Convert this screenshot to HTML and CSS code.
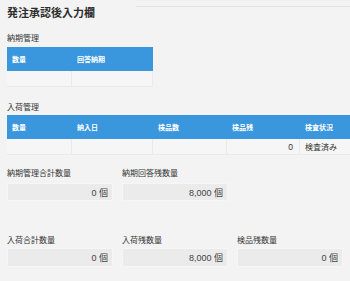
FILE: index.html
```html
<!DOCTYPE html>
<html lang="ja">
<head>
<meta charset="utf-8">
<link rel="stylesheet" href="styles.css">
</head>
<body>
<div class="page">
  <div class="head">
    <h1 class="title">発注承認後入力欄</h1>
    <div class="topline"></div>
  </div>

  <div class="section-label first">納期管理</div>
  <div class="table t1">
    <div class="th">数量</div>
    <div class="th">回答納期</div>
    <div class="td"></div>
    <div class="td"></div>
  </div>

  <div class="section-label second">入荷管理</div>
  <div class="table t2">
    <div class="th">数量</div>
    <div class="th">納入日</div>
    <div class="th">検品数</div>
    <div class="th">検品残</div>
    <div class="th">検査状況</div>
    <div class="td"></div>
    <div class="td"></div>
    <div class="td"></div>
    <div class="td num">0</div>
    <div class="td">検査済み</div>
  </div>

  <div class="fields row1">
    <div class="field">
      <div class="flabel">納期管理合計数量</div>
      <div class="fbox">0 個</div>
    </div>
    <div class="field">
      <div class="flabel">納期回答残数量</div>
      <div class="fbox">8,000 個</div>
    </div>
  </div>

  <div class="fields row2">
    <div class="field">
      <div class="flabel">入荷合計数量</div>
      <div class="fbox">0 個</div>
    </div>
    <div class="field">
      <div class="flabel">入荷残数量</div>
      <div class="fbox">8,000 個</div>
    </div>
    <div class="field">
      <div class="flabel">検品残数量</div>
      <div class="fbox">0 個</div>
    </div>
  </div>
</div>
</body>
</html>
```

FILE: styles.css
```css
* { box-sizing: border-box; }
html, body {
  margin: 0;
  padding: 0;
  background: #f3f3f3;
  width: 350px;
  height: 281px;
  overflow: hidden;
}
body {
  font-family: "Liberation Sans", "Noto Sans CJK JP", sans-serif;
  color: #333;
}
.page {
  padding: 4px 0 0 7px;
}
.head {
  display: flex;
  align-items: flex-start;
  height: 16px;
}
.title {
  margin: 0;
  font-size: 11px;
  line-height: 16px;
  font-weight: bold;
  color: #2e2e2e;
  font-family: "Noto Sans CJK JP", sans-serif;
}
.topline {
  margin-left: auto;
  margin-top: -4px;
  width: 214px;
  height: 7px;
  border-top: 1px solid #f0f0f0;
  border-bottom: 1px solid #e4e4e4;
}
.section-label {
  font-size: 8px;
  line-height: 10px;
  color: #333;
  font-family: "Noto Sans CJK JP", sans-serif;
}
.section-label.first { margin-top: 13px; }
.section-label.second { margin-top: 15px; }
.table {
  display: grid;
  margin-top: 3px;
  font-family: "Noto Sans CJK JP", sans-serif;
}
.t1 {
  grid-template-columns: 65px 81px;
  grid-template-rows: 24px 16px;
  margin-top: 4px;
}
.t2 {
  grid-template-columns: 65px 81px 74px 73px 1fr;
  grid-template-rows: 24px 16px;
}
.th {
  background: #3a96dd;
  color: #fff;
  font-size: 7px;
  font-weight: bold;
  display: flex;
  align-items: center;
  padding-left: 5px;
}
.td {
  background: #f6f6f6;
  border-right: 1px solid #eaeaea;
  border-bottom: 1px solid #eaeaea;
  font-size: 8px;
  color: #333;
  display: flex;
  align-items: center;
  padding-left: 5px;
}
.td:first-of-type { border-left: 1px solid #eaeaea; }
.t2 .td:last-child { border-right: none; }
.td.num {
  justify-content: flex-end;
  padding-right: 6px;
  font-size: 8.5px;
  font-family: "Liberation Sans", sans-serif;
}
.fields {
  display: flex;
  gap: 9px;
}
.row1 { margin-top: 13px; }
.row2 { margin-top: 34px; }
.field {
  width: 106px;
}
.flabel {
  font-size: 8px;
  line-height: 10px;
  color: #333;
  font-family: "Noto Sans CJK JP", sans-serif;
}
.fbox {
  margin-top: 5px;
  height: 18px;
  background: #ebebeb;
  border: 1px solid #f6f6f6;
  font-size: 9px;
  color: #444;
  display: flex;
  align-items: center;
  justify-content: flex-end;
  padding-right: 4px;
  font-family: "Liberation Sans", "Noto Sans CJK JP", sans-serif;
}
.row2 .fbox { height: 19px; margin-top: 3px; }
```
